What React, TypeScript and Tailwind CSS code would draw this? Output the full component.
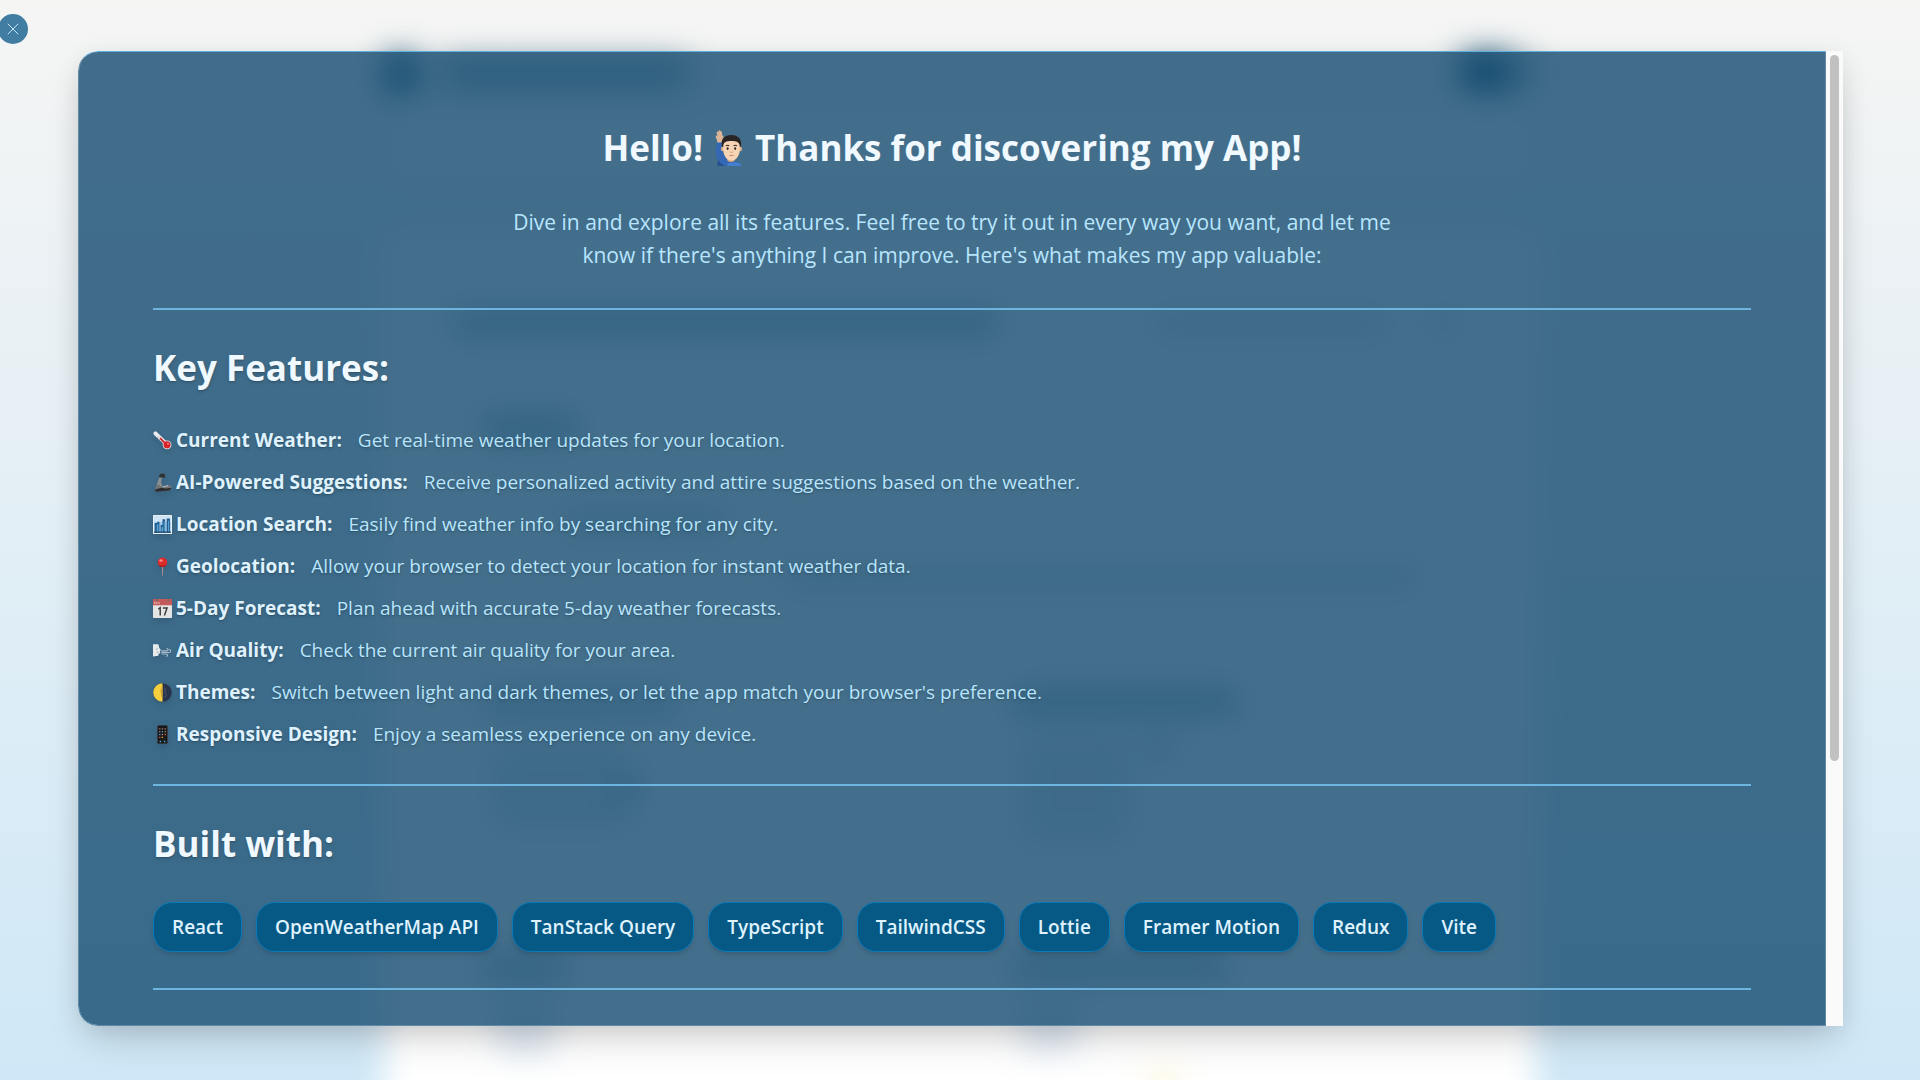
import type { ReactNode } from "react";

type Feature = { icon: ReactNode; title: string; text: string };

function Glyph({ label, children }: { label: string; children: ReactNode }) {
  return (
    <svg role="img" aria-label={label} viewBox="0 0 20 20" className="h-[19px] w-[19px] shrink-0 drop-shadow-md">
      {children}
    </svg>
  );
}

const features: Feature[] = [
  {
    title: "Current Weather:",
    text: "Get real-time weather updates for your location.",
    icon: (
      <Glyph label="thermometer">
        <path d="M2.6 2.6 14 13.6" stroke="#e8eaec" strokeWidth="4.2" strokeLinecap="round" />
        <circle cx="14.8" cy="14.6" r="4.6" fill="#e3e5e8" />
        <path d="M8 8l6 6" stroke="#d8232a" strokeWidth="2" strokeLinecap="round" />
        <circle cx="14.8" cy="14.6" r="3.7" fill="#d8232a" />
        <circle cx="15.8" cy="13.4" r="1" fill="#ff8a8a" />
        <path d="M5 7l1-1M7 9l1-1M9 11l1-1" stroke="#7b4b50" strokeWidth=".7" />
      </Glyph>
    ),
  },
  {
    title: "AI-Powered Suggestions:",
    text: "Receive personalized activity and attire suggestions based on the weather.",
    icon: (
      <Glyph label="mechanical arm">
        <path d="M6.400 5C5.800 1.600 9 0 11.400.8c1.600.6 1.800 2.600 1 4.400L9.800 4.600z" fill="#303133" />
        <path d="M6.600 4.600l2.600.6-.6 5 1.600 4-4.600 2.200-2.200-2.800z" fill="#8b8e91" />
        <path d="M3 12.600c2.400-1 4.600 0 6 2.400l7-2c2-.4 3.600.6 3.800 2.600L17 18.600l-8 .6-6.400.2z" fill="#737679" />
        <path d="M2.400 17.400 8.600 15.600l4.800.8 6.400-1-2.400 3-14.600 1.400z" fill="#2b2c2e" />
        <path d="M10.400 14.600l5.600-1.400" stroke="#c3c6c9" strokeWidth="1" />
      </Glyph>
    ),
  },
  {
    title: "Location Search:",
    text: "Easily find weather info by searching for any city.",
    icon: (
      <Glyph label="cityscape">
        <rect x="0" y="0" width="20" height="20" rx=".6" fill="#e9eef2" />
        <rect x="1.2" y="1.2" width="17.6" height="17.6" fill="#9fcdee" />
        <rect x="1.2" y="1.2" width="17.6" height="6" fill="#cfe5f5" />
        <path d="M1.8 18.4V8.500h2.600V7h2.400v11.400zM8 18.400v-8h2V4.600h2.800v13.800zM14.400 18.400V3.800h3.400v14.600z" fill="#245f8f" />
        <path d="M4 18V10h1.600v8zM9 18v-5h1.600v5zM11.400 7h.9v10h-.9zM15.800 6h.9v12h-.9z" fill="#5aa9d8" />
        <path d="M1.2 17.400h17.600v1.400H1.200z" fill="#1d4b70" />
      </Glyph>
    ),
  },
  {
    title: "Geolocation:",
    text: "Allow your browser to detect your location for instant weather data.",
    icon: (
      <Glyph label="pin">
        <path d="M9.300 8h1.500l-.3 11.400h-.8z" fill="#a8918f" />
        <circle cx="10" cy="5.600" r="5" fill="#dc2b2b" />
        <path d="M5.800 8.200a5 5 0 0 0 8.400 0c-2.400 1.200-6 1.200-8.400 0z" fill="#a31717" />
        <ellipse cx="8.400" cy="3.600" rx="1.800" ry="1.300" fill="#ff8c86" />
      </Glyph>
    ),
  },
  {
    title: "5-Day Forecast:",
    text: "Plan ahead with accurate 5-day weather forecasts.",
    icon: (
      <Glyph label="calendar">
        <rect x="0" y="0" width="20" height="20" rx=".8" fill="#e4e4e4" />
        <path d="M0 0h20v6.600H0z" fill="#c4595a" />
        <path d="M1.400 5.400V3l1.200 1.600L3.800 3v2.400M5 5.400l1-2.200 1 2.200" stroke="#e8b9b5" strokeWidth=".7" fill="none" />
        <circle cx="4" cy="1.200" r="1" fill="#5d6f72" />
        <circle cx="16" cy="1.200" r="1" fill="#5d6f72" />
        <path d="M5.600 10.600 7.600 9.200v8.200M10.400 9.400h4.400l-2.800 8" stroke="#3b3b3b" strokeWidth="1.500" fill="none" />
      </Glyph>
    ),
  },
  {
    title: "Air Quality:",
    text: "Check the current air quality for your area.",
    icon: (
      <Glyph label="wind face">
        <path d="M0 3.400h5.400c1 1.600.6 2.600 1.400 4.200l1.600 2-1.200.9.400 2.300-1.600.6-.4 2.200L0 16.400z" fill="#e6eaed" />
        <path d="M3 8.600l2-.4M4 12l2-.2" stroke="#8a9299" strokeWidth=".8" />
        <path d="M9 10.400h5.600c1.800 0 1.800-2.600 0-2.600M9 12h8c2 0 2-3 .4-3M9.400 13.600h4.800c1.600 0 1.600 2.400 0 2.400" stroke="#a9bccb" strokeWidth="1.100" fill="none" strokeLinecap="round" />
      </Glyph>
    ),
  },
  {
    title: "Themes:",
    text: "Switch between light and dark themes, or let the app match your browser's preference.",
    icon: (
      <Glyph label="half moon">
        <circle cx="10" cy="10" r="9.800" fill="#27344c" />
        <path d="M10 .2a9.800 9.800 0 0 0 0 19.600z" fill="#f6cf3e" />
        <path d="M10 2.600c-2 1.800-.8 3.400-2 5s1 2.600.4 4.400 1 2.600 1.600 4.200z" fill="#cda233" />
        <path d="M11.500 5l2 2-1 3 1.600 2.400-1.800 3" stroke="#47536a" strokeWidth="1.100" fill="none" />
      </Glyph>
    ),
  },
  {
    title: "Responsive Design:",
    text: "Enjoy a seamless experience on any device.",
    icon: (
      <Glyph label="mobile phone">
        <rect x="4.600" y=".2" width="10.800" height="19.600" rx="1.600" fill="#17181a" stroke="#4a4c4f" strokeWidth=".6" />
        <path d="M6.400 4h1.400M9.200 4h1.400M12.200 4h1.400M6.400 7h1.400M12.200 7h1.400M9.200 10h1.400" stroke="#a87f75" strokeWidth="1.400" />
        <path d="M6.400 10h1.400M9.200 7h1.400" stroke="#4b8bd0" strokeWidth="1.400" />
        <path d="M12.200 10h1.400M6.400 13h1.400" stroke="#e0502f" strokeWidth="1.400" />
        <path d="M9.200 13h1.400" stroke="#f0ac3a" strokeWidth="1.400" />
        <path d="M7 17.400h1.600M11.400 17.400H13" stroke="#4aa3e0" strokeWidth="1.400" />
      </Glyph>
    ),
  },
];

const stack = [
  "React",
  "OpenWeatherMap API",
  "TanStack Query",
  "TypeScript",
  "TailwindCSS",
  "Lottie",
  "Framer Motion",
  "Redux",
  "Vite",
];

function RaisedHand() {
  return (
    <svg role="img" aria-label="man raising hand" viewBox="0 0 28 37" className="h-[37px] w-[28px] shrink-0">
      <path d="M2.200 12C.4 18 .2 25 3 30l-.6 6h23.400c.8-2.400-.2-3.400-3-3.800L12 29C8 25 6.600 18 6.800 12z" fill="#3468b4" />
      <path d="M3 30c2.400 3 4.400 4.600 7 6H2.400z" fill="#27508f" />
      <path d="M12 33.400l8-1.200 4 .8c2.400.4 2.200 2.600 1.600 3H13z" fill="#4580d0" />
      <path d="M2.400 12.400C2.200 9.800.6 7.600.6 5.800c.6-.8 1.300-.2 1.800.6L1.600 2.200c.4-1 1.300-.8 1.600.1L3.600.8c.6-.9 1.500-.5 1.600.4.900-.6 1.500 0 1.600.9l.6 3.300c.9.6 1.500 1.800 2.200 3.200L6.600 12.400z" fill="#dcb598" />
      <path d="M12.400 27h7.200v3.800c-2 1.600-5.200 1.600-7.200 0z" fill="#d9a983" />
      <path d="M6.800 15.400C5.600 8.400 10 5 16 5s11 3.200 10 10.400L25 18H8z" fill="#2a2422" />
      <ellipse cx="7.600" cy="19" rx="1.600" ry="2.300" fill="#e2b08a" />
      <ellipse cx="25.400" cy="19" rx="1.600" ry="2.300" fill="#e2b08a" />
      <path d="M8.400 15c.6-2.600 2.600-4 8-4s7.400 1.400 8.200 4c.6 4 .4 7.600-1.400 11-1.600 3-4 4.600-6.800 4.600S11.200 29 9.800 26c-1.600-3.400-2-7-1.400-11z" fill="#f5d3b3" />
      <path d="M10.800 15.800c1-.7 2.400-.7 3.400 0M18.600 15.800c1-.7 2.400-.7 3.400 0" stroke="#3c2c26" strokeWidth="1.100" fill="none" />
      <ellipse cx="12.600" cy="18.600" rx="1" ry="1.300" fill="#33241f" />
      <ellipse cx="20.200" cy="18.600" rx="1" ry="1.300" fill="#33241f" />
      <path d="M15.400 22c.6.500 1.500.5 2.100 0" stroke="#c98e6d" strokeWidth="1" fill="none" />
      <path d="M13.800 24.800c2 .9 3.400.9 5.200 0-.6 1.700-4.400 1.800-5.200 0z" fill="#b5584c" />
    </svg>
  );
}

/* Weather page that shows through, out of focus, behind the dialog. */
const shapes = [
  "left-[386px] top-[55px] h-[38px] w-[30px] bg-[#0c4a6e]",
  "left-[440px] top-[60px] h-[26px] w-[250px] bg-[#0c4a6e]/50",
  "left-[1460px] top-[54px] h-[36px] w-[50px] bg-[#0c4a6e]",
  "left-[1500px] top-[56px] h-[32px] w-[35px] bg-[#0c4a6e]/35",
  "left-[450px] top-[312px] h-[22px] w-[550px] bg-[#0c4a6e]/40",
  "left-[1150px] top-[315px] h-[18px] w-[240px] bg-[#0c4a6e]/20",
  "left-[1430px] top-[310px] h-[24px] w-[28px] bg-[#0c4a6e]/20",
  "left-[480px] top-[416px] h-[24px] w-[100px] bg-[#0c4a6e]/40",
  "left-[560px] top-[512px] h-[20px] w-[170px] bg-[#0c4a6e]/25",
  "left-[780px] top-[568px] h-[20px] w-[640px] bg-[#0c4a6e]/20",
  "left-[480px] top-[690px] h-[24px] w-[200px] bg-[#0c4a6e]/30",
  "left-[1010px] top-[690px] h-[24px] w-[230px] bg-[#0c4a6e]/40",
  "left-[490px] top-[740px] h-[90px] w-[140px] bg-[#0c4a6e]/12",
  "left-[1020px] top-[735px] h-[110px] w-[110px] bg-[#0c4a6e]/12",
  "left-[1145px] top-[735px] h-[24px] w-[28px] bg-[#0c4a6e]/30",
  "left-[620px] top-[778px] h-[22px] w-[20px] bg-[#0c4a6e]/50",
  "left-[480px] top-[956px] h-[22px] w-[90px] bg-[#0c4a6e]/40",
  "left-[1010px] top-[956px] h-[22px] w-[220px] bg-[#0c4a6e]/40",
  "left-[495px] top-[1000px] h-[55px] w-[60px] bg-[#7aa3cc]/25",
  "left-[1020px] top-[1000px] h-[52px] w-[60px] bg-[#7aa3cc]/25",
  "left-[1150px] top-[1072px] h-[16px] w-[28px] bg-[#f2e27a]/50",
];

function Backdrop() {
  return (
    <div aria-hidden="true" className="absolute inset-0 overflow-hidden bg-linear-to-b from-[#f5f5f4] to-[#cfe8f7]">
      <div className="absolute inset-x-[384px] top-[110px] h-[70px] rounded-2xl bg-white/50 blur-lg" />
      <div className="absolute inset-x-[384px] -bottom-10 top-[232px] rounded-2xl bg-white blur-lg" />
      {shapes.map((shape) => (
        <div key={shape} className={`absolute rounded-xl blur-lg ${shape}`} />
      ))}
    </div>
  );
}

function Divider() {
  return <hr className="h-[2px] w-full shrink-0 border-0 bg-[#6bb5e0]" />;
}

export default function App() {
  return (
    <div className="relative h-screen overflow-hidden font-['Open_Sans','Noto_Sans',sans-serif]">
      <Backdrop />

      <div className="relative h-full pt-[51px] pr-[77px] pb-[54px] pl-[78px]">
        <div
          role="dialog"
          aria-labelledby="welcome"
          className="flex h-full overflow-hidden rounded-l-[20px] shadow-[0_20px_40px_-10px_rgb(0_0_0/0.18),0_4px_24px_rgb(0_0_0/0.08)]"
        >
          <div className="min-w-0 flex-1 overflow-y-auto rounded-l-[20px] border border-t-[#5fb0dc] border-x-[#5f8ba7] border-b-[#5f8ba7] bg-[#10466c]/78 px-[74px] py-[74px] [scrollbar-width:none]">
            <div className="flex flex-col gap-9">
              <h1 id="welcome" className="flex items-center justify-center gap-3 text-[35px] leading-[44px] font-bold text-sky-50">
                Hello!
                <RaisedHand />
                <span>Thanks for discovering my App!</span>
              </h1>
              <p className="mx-auto max-w-[900px] text-center text-[21px] leading-[33px] text-sky-200">
                Dive in and explore all its features. Feel free to try it out in every way you want, and let me know if
                there's anything I can improve. Here's what makes my app valuable:
              </p>
              <Divider />
              <h2 className="text-[35px] leading-[44px] font-bold text-sky-50 text-shadow-md">Key Features:</h2>
              <ul className="flex flex-col gap-3.5 text-[19px] leading-[28px] text-shadow-md">
                {features.map((feature) => (
                  <li key={feature.title} className="flex items-center">
                    {feature.icon}
                    <strong className="ml-1 font-bold text-sky-100">{feature.title}</strong>
                    <span className="ml-4 text-sky-200">{feature.text}</span>
                  </li>
                ))}
              </ul>
              <Divider />
              <h2 className="text-[35px] leading-[44px] font-bold text-sky-50 text-shadow-md">Built with:</h2>
              <ul className="flex flex-wrap gap-3.5">
                {stack.map((name) => (
                  <li
                    key={name}
                    className="rounded-[19px] border border-[#0a7ab8] bg-[#075985] px-[18px] py-2.5 text-[19px] leading-[28px] font-semibold text-sky-100 shadow-md"
                  >
                    {name}
                  </li>
                ))}
              </ul>
              <Divider />
            </div>
          </div>
          <div aria-hidden="true" className="flex w-[17px] shrink-0 justify-center bg-[#fafafa] py-1">
            <div className="h-[73%] w-[9px] rounded-full bg-[#c1c1c1]" />
          </div>
        </div>
      </div>

      <button
        type="button"
        aria-label="Close"
        className="absolute top-[14px] -left-[2px] flex h-[30px] w-[30px] items-center justify-center rounded-full bg-[#417da2]"
      >
        <svg viewBox="0 0 12 12" className="h-3 w-3" fill="none" stroke="#c3e4f5" strokeWidth="1">
          <path d="M.8.8l10.400 10.400M11.200.8.8 11.200" />
        </svg>
      </button>
    </div>
  );
}
